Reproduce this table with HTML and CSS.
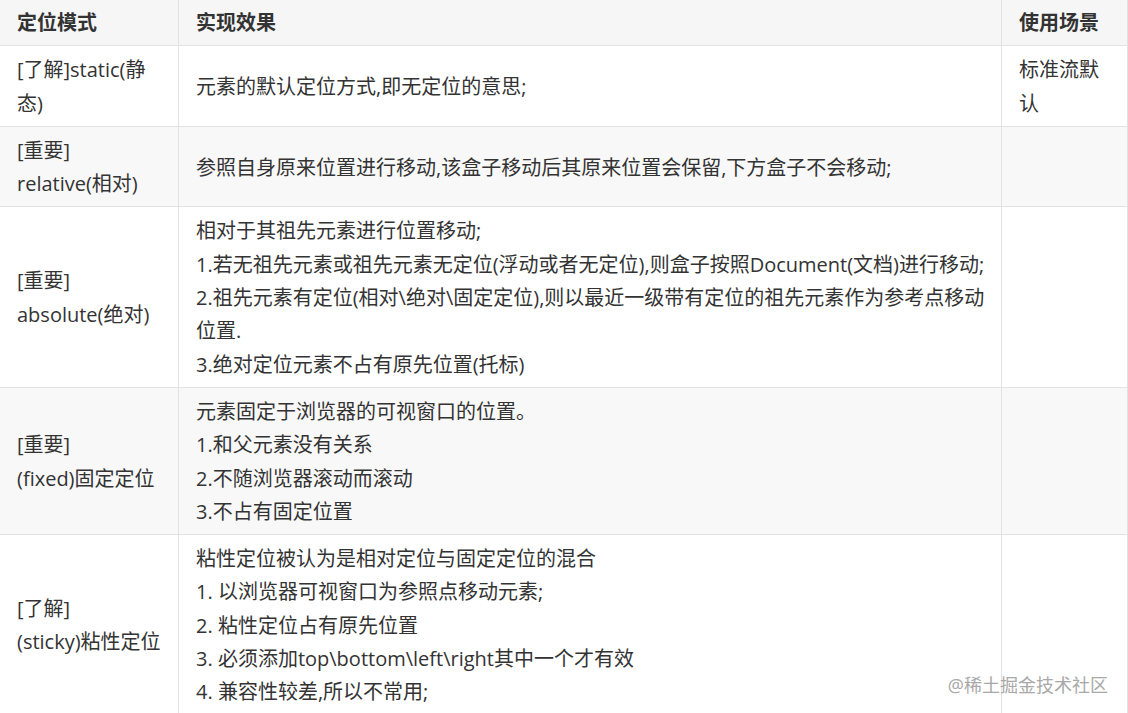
FILE: index.html
```html
<!DOCTYPE html>
<html lang="zh-CN">
<head>
    <meta charset="UTF-8">
    <meta name="viewport" content="width=device-width, initial-scale=1.0">
    <title>定位模式</title>
    <link rel="stylesheet" href="styles.css">
</head>
<body>
    <div class="page">
        <table class="tabela">
            <colgroup>
                <col class="col-modo">
                <col class="col-efeito">
                <col class="col-uso">
            </colgroup>
            <thead>
                <tr>
                    <th>定位模式</th>
                    <th>实现效果</th>
                    <th>使用场景</th>
                </tr>
            </thead>
            <tbody>
                <tr>
                    <td>[了解]static(静态)</td>
                    <td>元素的默认定位方式,即无定位的意思;</td>
                    <td>标准流默认</td>
                </tr>
                <tr>
                    <td>[重要]<br>relative(相对)</td>
                    <td>参照自身原来位置进行移动,该盒子移动后其原来位置会保留,下方盒子不会移动;</td>
                    <td></td>
                </tr>
                <tr>
                    <td>[重要]<br>absolute(绝对)</td>
                    <td>相对于其祖先元素进行位置移动;<br>1.若无祖先元素或祖先元素无定位(浮动或者无定位),则盒子按照Document(文档)进行移动;<br>2.祖先元素有定位(相对\绝对\固定定位),则以最近一级带有定位的祖先元素作为参考点移动位置.<br>3.绝对定位元素不占有原先位置(托标)</td>
                    <td></td>
                </tr>
                <tr>
                    <td>[重要]<br>(fixed)固定定位</td>
                    <td>元素固定于浏览器的可视窗口的位置。<br>1.和父元素没有关系<br>2.不随浏览器滚动而滚动<br>3.不占有固定位置</td>
                    <td></td>
                </tr>
                <tr>
                    <td>[了解]<br>(sticky)粘性定位</td>
                    <td>粘性定位被认为是相对定位与固定定位的混合<br>1. 以浏览器可视窗口为参照点移动元素;<br>2. 粘性定位占有原先位置<br>3. 必须添加top\bottom\left\right其中一个才有效<br>4. 兼容性较差,所以不常用;</td>
                    <td></td>
                </tr>
            </tbody>
        </table>
        <!-- marca d'água do site -->
        <div class="marca">@稀土掘金技术社区</div>
    </div>
</body>
</html>
```

FILE: styles.css
```css
body {
    font-family: 'Open Sans', 'Noto Sans CJK SC', sans-serif;
    background-color: #ffffff;
    color: #333;
    margin: 0;
    padding: 0;
    overflow: hidden;
}
.page {
    position: relative;
    width: 1128px;
    height: 713px;
    overflow: hidden;
}
.tabela {
    width: 1129px;
    margin-left: -1px;
    border-collapse: collapse;
    table-layout: fixed;
    font-size: 20px;
    line-height: 33.3px;
}
.col-modo {
    width: 179px;
}
.col-efeito {
    width: 823px;
}
.tabela th,
.tabela td {
    border: 1px solid #e2e2e2;
    padding: 7px 16px 6px 17px;
    text-align: left;
    vertical-align: middle;
    word-break: break-all;
}
.tabela th {
    font-weight: bold;
    background-color: #f6f6f6;
    border-top: none;
    padding-top: 6px;
}
.tabela tbody tr:nth-child(even) td {
    background-color: #f8f8f8;
}
.marca {
    position: absolute;
    right: 20px;
    bottom: 16px;
    font-size: 18px;
    color: #a8a8a8;
    text-shadow: 0 0 1px #fff;
}
```
